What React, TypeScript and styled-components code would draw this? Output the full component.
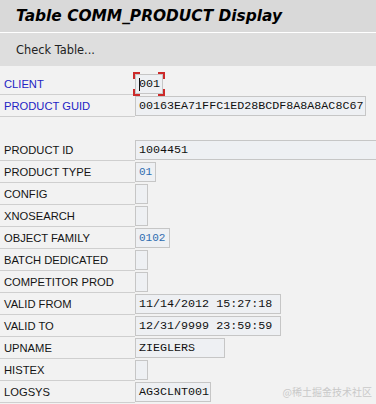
import styled, { createGlobalStyle } from "styled-components";

const GlobalStyle = createGlobalStyle`
  html, body {
    margin: 0;
    padding: 0;
    background: #f2f2f2;
  }
  body {
    font-family: "Liberation Sans", Arial, sans-serif;
  }
`;

const Page = styled.div`
  position: relative;
  width: 376px;
  height: 404px;
  overflow: hidden;
  background: #f2f2f2;
`;

const TitleBar = styled.header`
  display: flex;
  align-items: center;
  height: 32px;
  padding-left: 16px;
  background: #d9d9d9;
  border-bottom: 1px solid #ffffff;
`;

const Title = styled.h1`
  margin: 0;
  font-family: "DejaVu Sans", Verdana, sans-serif;
  font-size: 15.4px;
  font-weight: bold;
  font-style: italic;
  color: #000;
`;

const Toolbar = styled.div`
  display: flex;
  align-items: center;
  height: 33px;
  padding-left: 16px;
  background: #dedede;
`;

const ToolButton = styled.span`
  font-family: "DejaVu Sans", Tahoma, sans-serif;
  font-size: 11.4px;
  color: #222;
`;

const Content = styled.main`
  display: flex;
  flex-direction: column;
  gap: 22px;
  padding-top: 7px;
`;

const Section = styled.div`
  display: flex;
  flex-direction: column;
`;

const Row = styled.div`
  display: grid;
  grid-template-columns: 135px 1fr;
  height: 22px;
`;

const Label = styled.div<{ $key?: boolean }>`
  display: flex;
  align-items: center;
  padding-left: 4px;
  font-size: 11.2px;
  color: ${(p) => (p.$key ? "#2424c4" : "#141414")};
  border-bottom: 1px solid #cfcfcf;
  box-sizing: border-box;
`;

const FieldCell = styled.div`
  display: flex;
  align-items: center;
  min-width: 0;
`;

const Field = styled.div<{ $w: number; $tone?: "text" | "code" }>`
  position: relative;
  display: flex;
  align-items: center;
  box-sizing: border-box;
  flex: none;
  width: ${(p) => p.$w}px;
  height: 20px;
  padding-left: 3px;
  background: #eef0f3;
  border: 1px solid #c6c6c6;
  font-family: "Liberation Mono", "Courier New", monospace;
  font-size: ${(p) => (p.$tone === "code" ? "11px" : "11.7px")};
  color: ${(p) => (p.$tone === "code" ? "#2d6cb0" : "#111")};
  white-space: nowrap;
  overflow: visible;
`;

const Corner = styled.span<{ $pos: "tl" | "tr" | "bl" | "br" }>`
  position: absolute;
  width: 5px;
  height: 5px;
  border-color: #cc2a2a;
  border-style: solid;
  border-width: 0;
  ${(p) => (p.$pos[0] === "t" ? "top: -3px; border-top-width: 2px;" : "bottom: -3px; border-bottom-width: 2px;")}
  ${(p) => (p.$pos[1] === "l" ? "left: -3px; border-left-width: 2px;" : "right: -3px; border-right-width: 2px;")}
`;

const Caret = styled.span`
  display: inline-block;
  width: 1px;
  height: 13px;
  margin-right: -1px;
  background: #111;
`;

const Watermark = styled.div`
  position: absolute;
  right: 4px;
  bottom: 5px;
  font-family: "Noto Sans CJK SC", sans-serif;
  font-size: 10px;
  color: #c9c9c9;
`;

type Item = {
  label: string;
  value?: string;
  width: number;
  tone?: "text" | "code";
  key?: boolean;
  focus?: boolean;
};

const keyFields: Item[] = [
  { label: "CLIENT", value: "001", width: 28, key: true, focus: true },
  { label: "PRODUCT GUID", value: "00163EA71FFC1ED28BCDF8A8A8AC8C67", width: 231, key: true },
];

const dataFields: Item[] = [
  { label: "PRODUCT ID", value: "1004451", width: 260 },
  { label: "PRODUCT TYPE", value: "01", width: 21, tone: "code" },
  { label: "CONFIG", width: 13 },
  { label: "XNOSEARCH", width: 13 },
  { label: "OBJECT FAMILY", value: "0102", width: 35, tone: "code" },
  { label: "BATCH DEDICATED", width: 13 },
  { label: "COMPETITOR PROD", width: 13 },
  { label: "VALID FROM", value: "11/14/2012 15:27:18", width: 146 },
  { label: "VALID TO", value: "12/31/9999 23:59:59", width: 146 },
  { label: "UPNAME", value: "ZIEGLERS", width: 90 },
  { label: "HISTEX", width: 13 },
  { label: "LOGSYS", value: "AG3CLNT001", width: 76 },
];

const FieldRow = ({ item }: { item: Item }) => (
  <Row>
    <Label $key={item.key}>{item.label}</Label>
    <FieldCell>
      <Field $w={item.width} $tone={item.tone}>
        {item.focus ? <Caret /> : null}
        {item.value}
        {item.focus ? (
          <>
            <Corner $pos="tl" />
            <Corner $pos="tr" />
            <Corner $pos="bl" />
            <Corner $pos="br" />
          </>
        ) : null}
      </Field>
    </FieldCell>
  </Row>
);

export default function App() {
  return (
    <Page>
      <GlobalStyle />
      <TitleBar>
        <Title>Table COMM_PRODUCT Display</Title>
      </TitleBar>
      <Toolbar>
        <ToolButton>Check Table...</ToolButton>
      </Toolbar>
      <Content>
        <Section>
          {keyFields.map((f) => (
            <FieldRow key={f.label} item={f} />
          ))}
        </Section>
        <Section>
          {dataFields.map((f) => (
            <FieldRow key={f.label} item={f} />
          ))}
        </Section>
      </Content>
      <Watermark>@稀土掘金技术社区</Watermark>
    </Page>
  );
}
